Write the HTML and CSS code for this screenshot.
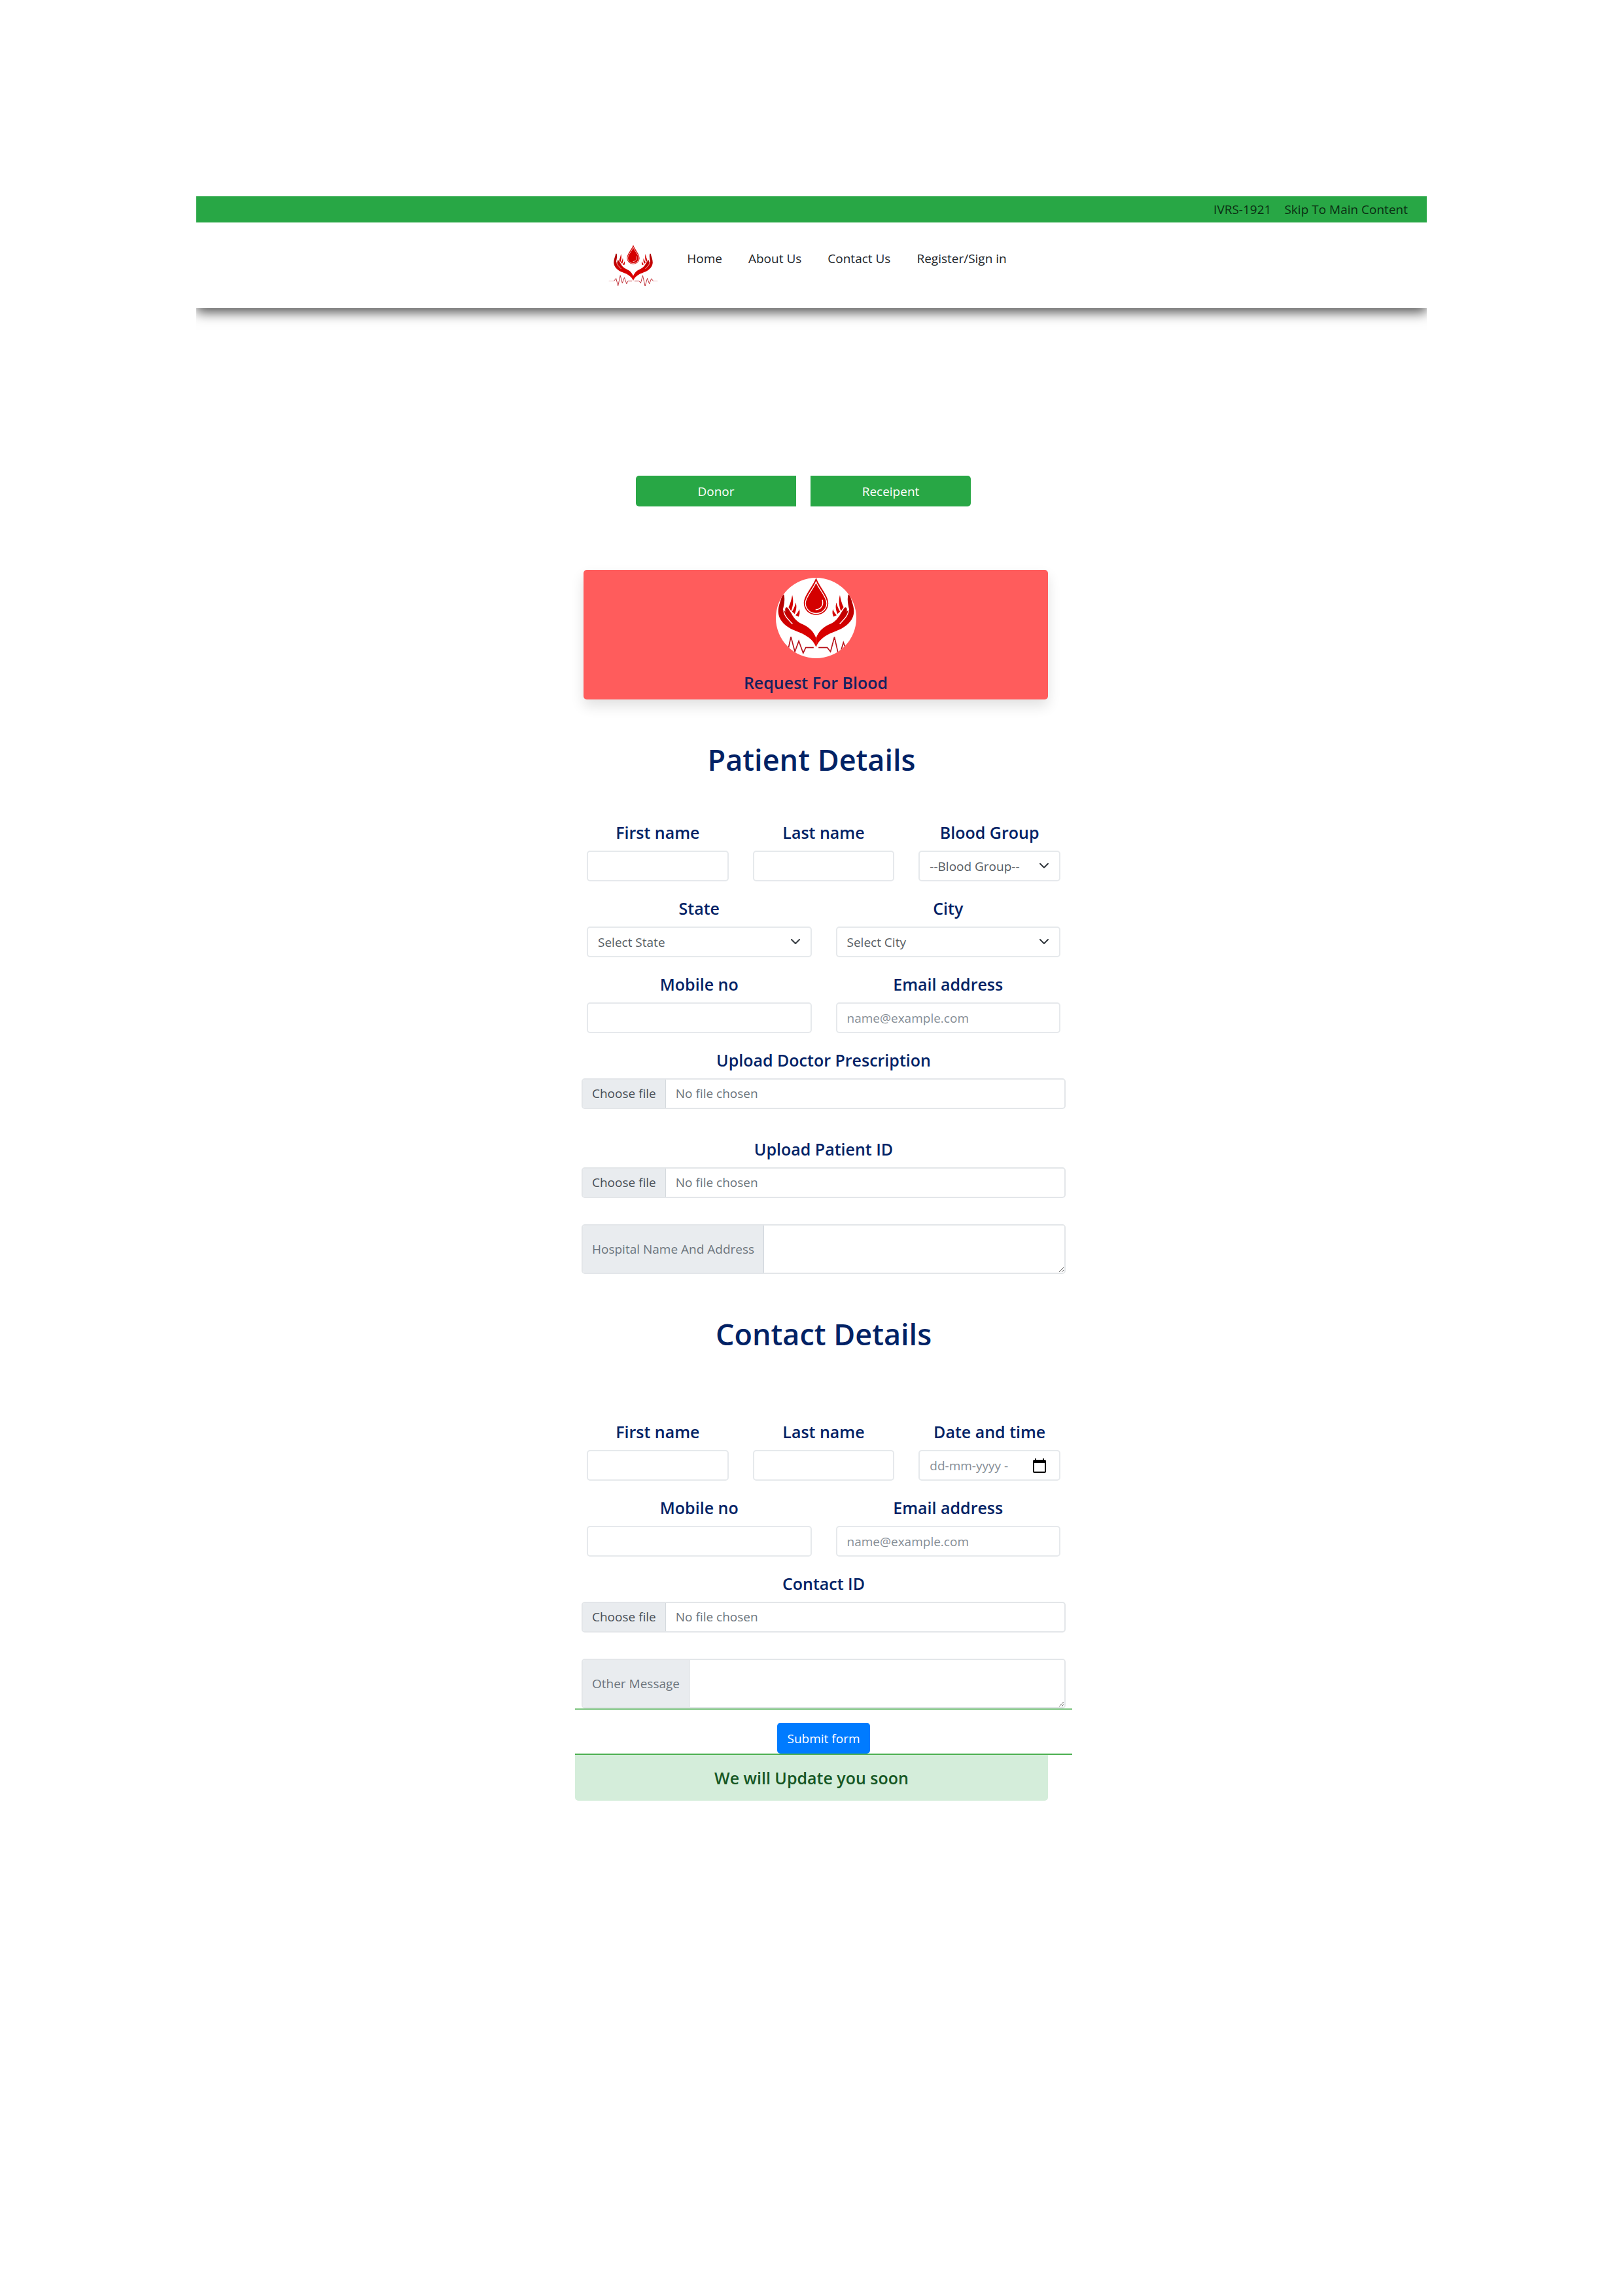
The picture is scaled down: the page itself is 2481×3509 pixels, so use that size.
FILE: index.html
```html
<!DOCTYPE html>
<html lang="en">
<head>
<meta charset="utf-8">
<title>Request For Blood</title>
<link rel="stylesheet" href="styles.css">
</head>
<body>
<svg class="defs" aria-hidden="true">
  <defs>
    <linearGradient id="skin" x1="0" y1="0" x2="0" y2="1">
      <stop offset="0" stop-color="#a80000"/>
      <stop offset=".6" stop-color="#d40000"/>
      <stop offset="1" stop-color="#e00000"/>
    </linearGradient>
    <g id="hand">
      <path fill="url(#skin)" d="M106 148C102 172 88 195 88 226C89 268 125 298 168 314C215 331 247 352 261 388V346C249 314 226 294 194 281C174 272 160 256 148 234L134 212C126 200 116 207 121 226L110 216C114 195 120 172 114 148Z"/>
      <path fill="none" stroke="#fff" stroke-width="4" stroke-linecap="round" d="M113 212C110 240 132 260 152 281"/>
      <path fill="#d40000" d="M152 150C159 176 156 200 147 223L135 206C143 190 148 172 152 150ZM168 185C174 204 170 221 163 236L151 226C159 213 165 200 168 185ZM184 214C188 228 186 240 181 249L167 242C175 234 181 225 184 214Z"/>
    </g>
    <g id="emblem">
      <use href="#hand"/>
      <use href="#hand" transform="translate(522 0) scale(-1 1)"/>
      <path fill="#d40000" d="M261 70C249 108 205 151 205 188A56 53 0 0 0 317 188C317 151 273 108 261 70Z"/>
      <path fill="none" stroke="#fff" stroke-width="4" d="M261 90C249 123 212 158 212 188A49 46 0 0 0 310 188C310 158 273 123 261 90Z"/>
      <path fill="none" stroke="#fff" stroke-width="4" stroke-linecap="round" d="M290 173C296 196 284 216 260 217"/>
      <path fill="none" stroke="#b8141c" stroke-width="5" d="M90 390L108 367L126 432L146 341L164 409L182 360L202 415L214 390H250M272 390H312L327 409L345 342L366 434L386 367L404 415L422 369L438 390"/>
      <path fill="none" stroke="#b8141c" stroke-opacity=".4" stroke-width="4" d="M44 390H90M438 390H478"/>
    </g>
    <symbol id="chevron" viewBox="0 0 14 9"><path d="M1 1l6 6 6-6" fill="none" stroke="#343a40" stroke-width="2" stroke-linecap="round" stroke-linejoin="round"/></symbol>
  </defs>
</svg>

<header class="site-header">
  <div class="topbar">
    <a href="#ivrs">IVRS-1921</a>
    <a href="#main">Skip To Main Content</a>
  </div>
  <nav class="nav">
    <a class="brand" href="#" aria-label="Blood donation"><svg class="brand-logo" viewBox="42 68 438 366" aria-hidden="true"><use href="#emblem"/></svg></a>
    <a href="#">Home</a>
    <a href="#about">About Us</a>
    <a href="#contact">Contact Us</a>
    <a href="#register">Register/Sign in</a>
  </nav>
</header>

<main id="main" class="column">
  <div class="roles">
    <button type="button" class="role role-first">Donor</button>
    <button type="button" class="role role-last">Receipent</button>
  </div>

  <section class="banner">
    <svg class="banner-logo" viewBox="77 71 368 368" aria-hidden="true">
      <clipPath id="round"><circle cx="261" cy="255" r="184"/></clipPath>
      <circle cx="261" cy="255" r="184" fill="#fff"/>
      <g clip-path="url(#round)"><use href="#emblem"/></g>
    </svg>
    <p>Request For Blood</p>
  </section>

  <h1 class="title">Patient Details</h1>

  <form class="form">
    <div class="fields">
      <div class="row three">
        <div class="field"><label for="p-first">First name</label><input class="control" id="p-first" type="text"></div>
        <div class="field"><label for="p-last">Last name</label><input class="control" id="p-last" type="text"></div>
        <div class="field"><label for="p-group">Blood Group</label>
          <div class="picker"><select class="control" id="p-group"><option>--Blood Group--</option></select><svg class="chevron" aria-hidden="true"><use href="#chevron"/></svg></div></div>
      </div>
      <div class="row two">
        <div class="field"><label for="p-state">State</label>
          <div class="picker"><select class="control" id="p-state"><option>Select State</option></select><svg class="chevron" aria-hidden="true"><use href="#chevron"/></svg></div></div>
        <div class="field"><label for="p-city">City</label>
          <div class="picker"><select class="control" id="p-city"><option>Select City</option></select><svg class="chevron" aria-hidden="true"><use href="#chevron"/></svg></div></div>
      </div>
      <div class="row two">
        <div class="field"><label for="p-mobile">Mobile no</label><input class="control" id="p-mobile" type="tel"></div>
        <div class="field"><label for="p-email">Email address</label><input class="control" id="p-email" type="email" placeholder="name@example.com"></div>
      </div>
      <div class="field wide"><label for="p-doc">Upload Doctor Prescription</label>
        <div class="file"><span class="file-button">Choose file</span><span class="file-name">No file chosen</span><input id="p-doc" type="file"></div></div>
      <div class="field wide spaced"><label for="p-id">Upload Patient ID</label>
        <div class="file"><span class="file-button">Choose file</span><span class="file-name">No file chosen</span><input id="p-id" type="file"></div></div>
      <div class="group"><label for="p-address">Hospital Name And Address</label><textarea id="p-address"></textarea></div>
    </div>

    <h2 class="title">Contact Details</h2>

    <div class="fields contact">
      <div class="row three">
        <div class="field"><label for="c-first">First name</label><input class="control" id="c-first" type="text"></div>
        <div class="field"><label for="c-last">Last name</label><input class="control" id="c-last" type="text"></div>
        <div class="field"><label for="c-date">Date and time</label>
          <div class="picker"><input class="control" id="c-date" type="text" placeholder="dd-mm-yyyy -">
            <svg class="calendar" viewBox="0 0 20 22" aria-hidden="true"><path fill="#000" fill-rule="evenodd" d="M3 0h2v2h10V0h2v2h1a2 2 0 0 1 2 2v16a2 2 0 0 1-2 2H2a2 2 0 0 1-2-2V4a2 2 0 0 1 2-2h1ZM2 7v13h16V7Z"/></svg></div></div>
      </div>
      <div class="row two">
        <div class="field"><label for="c-mobile">Mobile no</label><input class="control" id="c-mobile" type="tel"></div>
        <div class="field"><label for="c-email">Email address</label><input class="control" id="c-email" type="email" placeholder="name@example.com"></div>
      </div>
      <div class="field wide"><label for="c-id">Contact ID</label>
        <div class="file"><span class="file-button">Choose file</span><span class="file-name">No file chosen</span><input id="c-id" type="file"></div></div>
      <div class="group"><label for="c-message">Other Message</label><textarea id="c-message"></textarea></div>
    </div>

    <div class="actions"><button type="submit" class="submit">Submit form</button></div>
  </form>

  <p class="notice" role="status">We will Update you soon</p>
</main>
</body>
</html>
```
FILE: styles.css
```css
* { box-sizing: border-box; }

body {
  margin: 0;
  padding: 300px;
  background: #fff;
  color: #212529;
  font: 19px/28px "Open Sans", "Noto Sans", sans-serif;
}

h1, h2, p { margin: 0; }
a { color: inherit; text-decoration: none; }
button, input, select, textarea { font: inherit; }
.defs { position: absolute; width: 0; height: 0; }

/* Header */
.site-header {
  background: #fff;
  box-shadow: 0 6px 18px rgba(0, 0, 0, .7);
  clip-path: inset(0 0 -40px 0);
}
.topbar {
  display: flex;
  justify-content: flex-end;
  align-items: center;
  gap: 20px;
  height: 40px;
  padding: 0 29px;
  background: #28a745;
  color: #0b2e13;
}
.nav {
  display: flex;
  justify-content: center;
  gap: 40px;
  padding: 34px 28px 34px 16px;
}
.nav a { padding: 7px 0; }
.nav .brand { padding: 0 4px 0 0; }
.brand-logo { display: block; width: 76px; height: 63px; }

/* Centre column */
.column { max-width: 723px; margin: 256px auto 0; }

.roles {
  display: grid;
  grid-template-columns: 1fr 1fr;
  gap: 22px;
  padding: 0 118px 0 93px;
}
.role {
  height: 47px;
  border: 0;
  background: #28a745;
  color: #fff;
}
.role-first { border-radius: 5px 0 0 5px; }
.role-last { border-radius: 0 5px 5px 0; }

.banner {
  margin: 97px 0 0 13px;
  padding: 12px 0 8px;
  border-radius: 5px;
  background: #ff5c5c;
  box-shadow: 0 10px 20px rgba(0, 0, 0, .12);
  color: #14215f;
  font-size: 25px;
  font-weight: 600;
  line-height: 36px;
  text-align: center;
}
.banner-logo { display: block; width: 123px; height: 123px; margin: 0 auto 19px; }

.title {
  margin-top: 62px;
  color: #012265;
  font-size: 45px;
  font-weight: 600;
  line-height: 60px;
  text-align: center;
}

/* Form */
.form { margin-right: -37px; }
.fields { padding: 63px 10px 0; }
.contact { padding-top: 101px; border-bottom: 2px solid #7cc47f; }
.row {
  display: grid;
  gap: 37px;
  padding: 0 8px;
  margin-bottom: 23px;
}
.three { grid-template-columns: repeat(3, minmax(0, 1fr)); }
.two { grid-template-columns: repeat(2, minmax(0, 1fr)); }
.field label {
  display: block;
  margin-bottom: 10px;
  color: #012265;
  font-size: 25px;
  font-weight: 600;
  line-height: 36px;
  text-align: center;
}
.spaced { margin-top: 43px; }

.control {
  display: block;
  width: 100%;
  height: 47px;
  padding: 0 15px;
  border: 2px solid #e6e9ec;
  border-radius: 5px;
  background: #fff;
  color: #565c62;
  appearance: none;
}
.control::placeholder { color: #868e96; opacity: 1; }

.picker { display: grid; align-items: center; }
.picker > * { grid-area: 1 / 1; }
.picker svg { justify-self: end; margin-right: 18px; pointer-events: none; }
.chevron { width: 14px; height: 9px; }
.picker .calendar { width: 20px; height: 22px; margin-right: 22px; }

.file {
  position: relative;
  display: flex;
  height: 47px;
  border: 2px solid #e3e6e9;
  border-radius: 5px;
  overflow: hidden;
  line-height: 43px;
}
.file-button {
  padding: 0 14px;
  border-right: 1px solid #d5dade;
  background: #e9ecef;
  color: #495057;
}
.file-name { padding: 0 15px; color: #6c757d; }
.file input { position: absolute; inset: 0; width: 100%; height: 100%; opacity: 0; }

.group {
  display: flex;
  height: 76px;
  margin-top: 40px;
  border: 2px solid #e3e6e9;
  border-radius: 5px;
  overflow: hidden;
}
.group label {
  padding: 0 14px;
  border-right: 1px solid #ced4da;
  background: #e9ecef;
  color: #6c757d;
  line-height: 72px;
}
.group textarea {
  flex: 1;
  min-width: 0;
  border: 0;
  padding: 8px 14px;
  resize: vertical;
}

.actions {
  padding-top: 20px;
  border-bottom: 2px solid #4caf50;
  text-align: center;
}
.submit {
  display: block;
  height: 47px;
  margin: 0 auto;
  padding: 0 16px;
  border: 0;
  border-radius: 5px;
  background: #007bff;
  color: #fff;
}

.notice {
  padding: 17px;
  border-radius: 0 0 5px 5px;
  background: #d4edda;
  color: #155724;
  font-size: 25px;
  font-weight: 600;
  line-height: 36px;
  text-align: center;
}
```
